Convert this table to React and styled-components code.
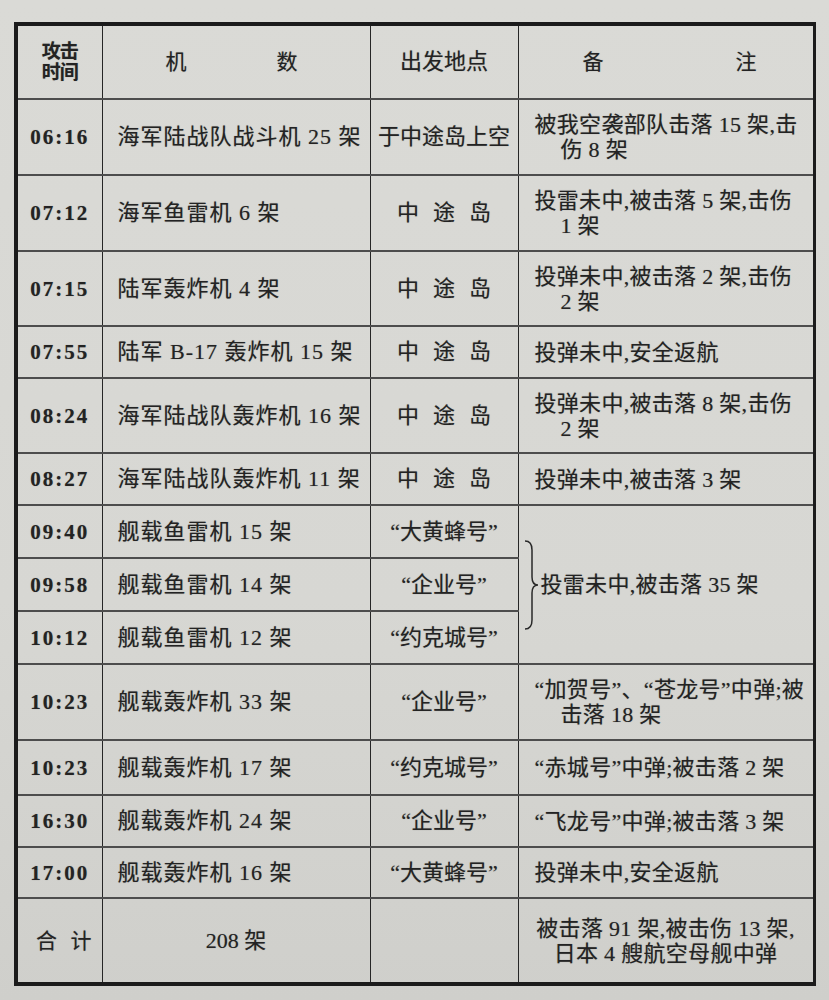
import React from "react";
import styled, { createGlobalStyle } from "styled-components";

const Global = createGlobalStyle`
  html, body {
    margin: 0;
    padding: 0;
    background: #d3d4cf;
  }
  body {
    font-family: "Liberation Serif", "Noto Sans CJK SC", serif;
    color: #232323;
  }
`;

const Page = styled.div`
  width: 829px;
  height: 1000px;
  box-sizing: border-box;
  padding: 22px 17px 0 14px;
  background: linear-gradient(180deg, #dadad6 0%, #d7d7d3 60%, #cfcfcb 100%);
`;

const Table = styled.table`
  width: 798px;
  border-collapse: collapse;
  table-layout: fixed;
  border-top: 4px solid #1b1b1b;
  border-left: 4px solid #1b1b1b;
  border-right: 3px solid #1b1b1b;
  border-bottom: 4px solid #1b1b1b;
  font-size: 22px;
  text-shadow: 0 0 1px rgba(0, 0, 0, 0.35);
`;

const Td = styled.td`
  height: ${(p) => p.$h - 2}px;
  padding: 0;
  border-top: 2px solid #4d4d4d;
  border-bottom: 2px solid #4d4d4d;
  border-left: 1.5px solid #262626;
  border-right: 1.5px solid #262626;
  vertical-align: middle;
  text-align: center;
  white-space: nowrap;
  line-height: 22px;
`;

const TimeCell = styled(Td)`
  font-size: 21px;
  letter-spacing: 2px;
  font-weight: 700;
`;

const NameCell = styled(Td)`
  text-align: left;
  padding-left: 15px;
  letter-spacing: 1px;
`;

const FromCell = styled(Td)`
  letter-spacing: ${(p) => (p.$spread ? "14px" : "0")};
  padding-left: ${(p) => (p.$spread ? "14px" : "0")};
`;

const NoteCell = styled(Td)`
  text-align: ${(p) => (p.$center ? "center" : "left")};
  padding-left: ${(p) => (p.$center ? "0" : "16px")};
`;

const NoteLine = styled.div`
  padding-left: ${(p) => (p.$indent ? "26px" : "0")};
  letter-spacing: 0.3px;
  line-height: 25px;
`;

const HeadStack = styled.div`
  font-size: 19px;
  line-height: 21px;
  font-weight: 700;
  letter-spacing: -1px;
`;

const Spread = styled.div`
  display: flex;
  justify-content: space-between;
  padding: ${(p) => p.$pad};
  font-size: 21px;
`;

const BraceWrap = styled.div`
  display: flex;
  align-items: center;
  gap: 2px;
  padding-left: 4px;
`;

const Brace = () => (
  <svg width="16" height="92" viewBox="0 0 16 92" fill="none">
    <path
      d="M2 2 Q9 2 9 11 L9 38 Q9 46 15 46 Q9 46 9 54 L9 81 Q9 90 2 90"
      stroke="#2a2a2a"
      strokeWidth="1.5"
    />
  </svg>
);

const rows = [
  { t: "06:16", n: "海军陆战队战斗机 25 架", f: "于中途岛上空", r: ["被我空袭部队击落 15 架,击", "伤 8 架"], h: 76 },
  { t: "07:12", n: "海军鱼雷机 6 架", f: "中途岛", s: true, r: ["投雷未中,被击落 5 架,击伤", "1 架"], h: 76 },
  { t: "07:15", n: "陆军轰炸机 4 架", f: "中途岛", s: true, r: ["投弹未中,被击落 2 架,击伤", "2 架"], h: 75 },
  { t: "07:55", n: "陆军 B-17 轰炸机 15 架", f: "中途岛", s: true, r: ["投弹未中,安全返航"], h: 52 },
  { t: "08:24", n: "海军陆战队轰炸机 16 架", f: "中途岛", s: true, r: ["投弹未中,被击落 8 架,击伤", "2 架"], h: 75 },
  { t: "08:27", n: "海军陆战队轰炸机 11 架", f: "中途岛", s: true, r: ["投弹未中,被击落 3 架"], h: 52 },
  { t: "09:40", n: "舰载鱼雷机 15 架", f: "“大黄蜂号”", merged: true, h: 53 },
  { t: "09:58", n: "舰载鱼雷机 14 架", f: "“企业号”", h: 53 },
  { t: "10:12", n: "舰载鱼雷机 12 架", f: "“约克城号”", h: 53 },
  { t: "10:23", n: "舰载轰炸机 33 架", f: "“企业号”", r: ["“加贺号”、“苍龙号”中弹;被", "击落 18 架"], h: 76 },
  { t: "10:23", n: "舰载轰炸机 17 架", f: "“约克城号”", r: ["“赤城号”中弹;被击落 2 架"], h: 55 },
  { t: "16:30", n: "舰载轰炸机 24 架", f: "“企业号”", r: ["“飞龙号”中弹;被击落 3 架"], h: 52 },
  { t: "17:00", n: "舰载轰炸机 16 架", f: "“大黄蜂号”", r: ["投弹未中,安全返航"], h: 51 },
];

export default function App() {
  return (
    <Page>
      <Global />
      <Table>
        <colgroup>
          <col style={{ width: "86px" }} />
          <col style={{ width: "268px" }} />
          <col style={{ width: "148px" }} />
          <col style={{ width: "296px" }} />
        </colgroup>
        <tbody>
          <tr>
            <Td $h={74}>
              <HeadStack>
                攻击
                <br />
                时间
              </HeadStack>
            </Td>
            <Td $h={74}>
              <Spread $pad="0 72px 0 63px">
                <span>机</span>
                <span>数</span>
              </Spread>
            </Td>
            <Td $h={74}>出发地点</Td>
            <Td $h={74}>
              <Spread $pad="0 56px 0 64px">
                <span>备</span>
                <span>注</span>
              </Spread>
            </Td>
          </tr>
          {rows.map((row, i) => (
            <tr key={i}>
              <TimeCell $h={row.h}>{row.t}</TimeCell>
              <NameCell $h={row.h}>{row.n}</NameCell>
              <FromCell $h={row.h} $spread={row.s}>
                {row.f}
              </FromCell>
              {row.merged && (
                <NoteCell $h={row.h} rowSpan={3} style={{ paddingLeft: 0 }}>
                  <BraceWrap>
                    <Brace />
                    <NoteLine>投雷未中,被击落 35 架</NoteLine>
                  </BraceWrap>
                </NoteCell>
              )}
              {row.r && (
                <NoteCell $h={row.h}>
                  {row.r.map((line, j) => (
                    <NoteLine key={j} $indent={j > 0}>
                      {line}
                    </NoteLine>
                  ))}
                </NoteCell>
              )}
            </tr>
          ))}
          <tr>
            <Td $h={85}>
              <Spread $pad="0 10px 0 18px">
                <span>合</span>
                <span>计</span>
              </Spread>
            </Td>
            <Td $h={85}>208 架</Td>
            <Td $h={85} />
            <NoteCell $h={85} $center>
              <NoteLine>被击落 91 架,被击伤 13 架,</NoteLine>
              <NoteLine>日本 4 艘航空母舰中弹</NoteLine>
            </NoteCell>
          </tr>
        </tbody>
      </Table>
    </Page>
  );
}
